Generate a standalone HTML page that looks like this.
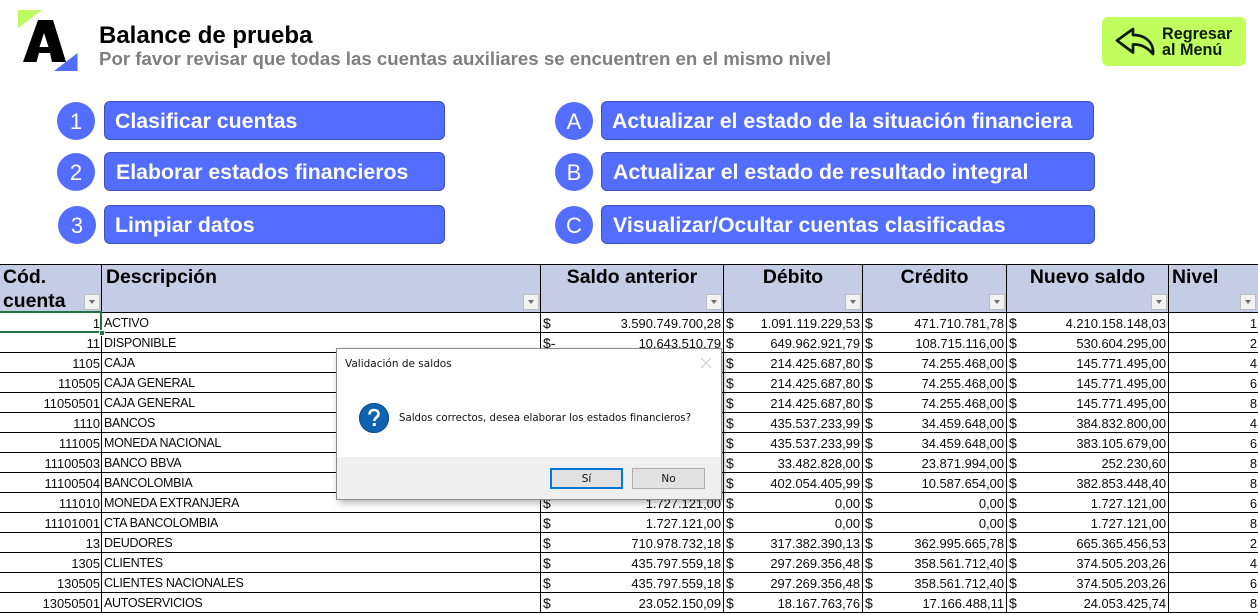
<!DOCTYPE html>
<html lang="es"><head><meta charset="utf-8"><title>Balance de prueba</title>
<style>
html,body{margin:0;padding:0;background:#fff}
#p{position:relative;width:1258px;height:614px;overflow:hidden;background:#fff;font-family:"Liberation Sans",sans-serif}
.a{position:absolute}
.t1{left:99px;top:22px;font-size:24px;font-weight:bold;color:#000;line-height:28px;white-space:nowrap}
.t2{left:99px;top:48px;font-size:18.66px;font-weight:bold;color:#7f7f7f;line-height:22px;white-space:nowrap}
.c{position:absolute;width:38px;height:38px;border-radius:50%;background:#536dfe;color:#fff;text-align:center;line-height:39px;font-size:22px}
.b{position:absolute;height:37px;box-sizing:content-box;border:1px solid #3f51b5;border-radius:6px;background:#536dfe;color:#fff;font-weight:bold;font-size:21.3px;line-height:39px;white-space:nowrap}
.b span{position:absolute;top:0}
.r{left:1102px;top:17px;width:144px;height:49px;background:#c0ff5e;border-radius:6px}
.r div{position:absolute;left:60px;font-weight:bold;font-size:16.2px;line-height:16px;color:#0c1a0c;white-space:nowrap}
table{position:absolute;left:-1px;top:264px;width:1259px;table-layout:fixed;border-collapse:collapse;font-size:12.9px;color:#0a0a0a}
td{border:1px solid #000;padding:2px 2px 0 2px;height:20px;line-height:17px;overflow:hidden;white-space:nowrap;text-align:right;box-sizing:border-box}
tr{height:20px}
td.n{padding-right:1px}
td.l{text-align:left;font-size:12.5px;letter-spacing:-.3px;padding-left:2px}
td i{float:left;font-style:normal;font-size:14px}
tr.h{height:47px}
th{border:1px solid #000;box-sizing:border-box;background:#c5cce6;font-size:19.4px;line-height:24px;vertical-align:top;text-align:center;padding:0 2px;height:47px;color:#000;overflow:hidden}
th div{height:47px}
th.l{text-align:left}
.f{position:absolute;width:16px;height:16px;background:#f2f2f2;border:1px solid #bdbdbd;box-sizing:border-box;top:294px}
.f:after{content:"";position:absolute;left:3.5px;top:5px;border-left:3.5px solid transparent;border-right:3.5px solid transparent;border-top:4px solid #6e6e6e}
.sel{left:-2px;top:311px;width:100px;height:18px;border:2px solid #217346}
.hd{left:99px;top:330px;width:6px;height:6px;background:#217346;border:1px solid #fff;box-sizing:border-box}
.dl{left:337px;top:349px;width:384px;height:150px;background:#fff;box-shadow:0 0 0 1px #8c8c8c,2px 3px 8px rgba(0,0,0,.35);font-family:"DejaVu Sans",sans-serif;font-size:10.5px;color:#111}
.ft{left:0;top:108px;width:384px;height:42px;background:#efefef}
.bt{position:absolute;top:119px;width:73px;height:21px;box-sizing:border-box;background:#e1e1e1;border:1px solid #adadad;text-align:center;line-height:21px;font-size:10.5px}
</style></head><body><div id="p">
<svg class="a" style="left:0;top:0" width="90" height="80" viewBox="0 0 90 80">
<polygon points="18,10 42,10 18,28" fill="#bdfb5e"/>
<path fill="#000" fill-rule="evenodd" d="M38,20H53L66,62H52L50,53H39L36.500,62H23ZM44,33L39.500,47H48.500Z"/>
<polygon points="77.500,53 77.500,71 54,71" fill="#536dfe"/>
</svg>
<div class="a t1">Balance de prueba</div>
<div class="a t2">Por favor revisar que todas las cuentas auxiliares se encuentren en el mismo nivel</div>
<div class="a r">
<svg class="a" style="left:0;top:0" width="60" height="49" viewBox="1102 17 60 49"><path d="M1117,40.500L1133,29V35C1147,35 1154,44 1153,54C1148,48 1142,44 1133,44.500V52.500Z" fill="none" stroke="#0c1a0c" stroke-width="2.700" stroke-linejoin="round"/></svg>
<div style="top:9px">Regresar</div><div style="top:25px">al Menú</div>
</div>
<div class="c" style="left:57px;top:102px">1</div>
<div class="c" style="left:57px;top:153px">2</div>
<div class="c" style="left:58px;top:206px">3</div>
<div class="c" style="left:555px;top:102px">A</div>
<div class="c" style="left:555px;top:153px">B</div>
<div class="c" style="left:555px;top:206px">C</div>
<div class="b" style="left:104px;top:101px;width:339px"><span style="left:10px">Clasificar cuentas</span></div>
<div class="b" style="left:104px;top:152px;width:339px"><span style="left:11px">Elaborar estados financieros</span></div>
<div class="b" style="left:104px;top:205px;width:339px"><span style="left:10px">Limpiar datos</span></div>
<div class="b" style="left:601px;top:101px;width:491px"><span style="left:10px">Actualizar el estado de la situación financiera</span></div>
<div class="b" style="left:601px;top:152px;width:492px"><span style="left:11px">Actualizar el estado de resultado integral</span></div>
<div class="b" style="left:601px;top:205px;width:492px"><span style="left:11px">Visualizar/Ocultar cuentas clasificadas</span></div>
<table>
<colgroup><col style="width:102px"><col style="width:439px"><col style="width:183px"><col style="width:139px"><col style="width:144px"><col style="width:162px"><col style="width:90px"></colgroup>
<tr class="h"><th class="l" style="padding-left:3px"><div>Cód. cuenta</div></th><th class="l" style="padding-left:4px"><div>Descripción</div></th><th><div>Saldo anterior</div></th><th><div>Débito</div></th><th><div>Crédito</div></th><th><div>Nuevo saldo</div></th><th class="l" style="padding-left:3px"><div>Nivel</div></th></tr>
<tr><td class="n">1</td><td class="l">ACTIVO</td><td><i>$</i>3.590.749.700,28</td><td><i>$</i>1.091.119.229,53</td><td><i>$</i>471.710.781,78</td><td><i>$</i>4.210.158.148,03</td><td class="n">1</td></tr>
<tr><td class="n">11</td><td class="l">DISPONIBLE</td><td><i>$-</i>10.643.510,79</td><td><i>$</i>649.962.921,79</td><td><i>$</i>108.715.116,00</td><td><i>$</i>530.604.295,00</td><td class="n">2</td></tr>
<tr><td class="n">1105</td><td class="l">CAJA</td><td><i>$</i>10.643.510,79</td><td><i>$</i>214.425.687,80</td><td><i>$</i>74.255.468,00</td><td><i>$</i>145.771.495,00</td><td class="n">4</td></tr>
<tr><td class="n">110505</td><td class="l">CAJA GENERAL</td><td><i>$</i>10.643.510,79</td><td><i>$</i>214.425.687,80</td><td><i>$</i>74.255.468,00</td><td><i>$</i>145.771.495,00</td><td class="n">6</td></tr>
<tr><td class="n">11050501</td><td class="l">CAJA GENERAL</td><td><i>$</i>10.643.510,79</td><td><i>$</i>214.425.687,80</td><td><i>$</i>74.255.468,00</td><td><i>$</i>145.771.495,00</td><td class="n">8</td></tr>
<tr><td class="n">1110</td><td class="l">BANCOS</td><td><i>$</i>10.643.510,79</td><td><i>$</i>435.537.233,99</td><td><i>$</i>34.459.648,00</td><td><i>$</i>384.832.800,00</td><td class="n">4</td></tr>
<tr><td class="n">111005</td><td class="l">MONEDA NACIONAL</td><td><i>$</i>10.643.510,79</td><td><i>$</i>435.537.233,99</td><td><i>$</i>34.459.648,00</td><td><i>$</i>383.105.679,00</td><td class="n">6</td></tr>
<tr><td class="n">11100503</td><td class="l">BANCO BBVA</td><td><i>$</i>10.643.510,79</td><td><i>$</i>33.482.828,00</td><td><i>$</i>23.871.994,00</td><td><i>$</i>252.230,60</td><td class="n">8</td></tr>
<tr><td class="n">11100504</td><td class="l">BANCOLOMBIA</td><td><i>$</i>10.643.510,79</td><td><i>$</i>402.054.405,99</td><td><i>$</i>10.587.654,00</td><td><i>$</i>382.853.448,40</td><td class="n">8</td></tr>
<tr><td class="n">111010</td><td class="l">MONEDA EXTRANJERA</td><td><i>$</i>1.727.121,00</td><td><i>$</i>0,00</td><td><i>$</i>0,00</td><td><i>$</i>1.727.121,00</td><td class="n">6</td></tr>
<tr><td class="n">11101001</td><td class="l">CTA BANCOLOMBIA</td><td><i>$</i>1.727.121,00</td><td><i>$</i>0,00</td><td><i>$</i>0,00</td><td><i>$</i>1.727.121,00</td><td class="n">8</td></tr>
<tr><td class="n">13</td><td class="l">DEUDORES</td><td><i>$</i>710.978.732,18</td><td><i>$</i>317.382.390,13</td><td><i>$</i>362.995.665,78</td><td><i>$</i>665.365.456,53</td><td class="n">2</td></tr>
<tr><td class="n">1305</td><td class="l">CLIENTES</td><td><i>$</i>435.797.559,18</td><td><i>$</i>297.269.356,48</td><td><i>$</i>358.561.712,40</td><td><i>$</i>374.505.203,26</td><td class="n">4</td></tr>
<tr><td class="n">130505</td><td class="l">CLIENTES NACIONALES</td><td><i>$</i>435.797.559,18</td><td><i>$</i>297.269.356,48</td><td><i>$</i>358.561.712,40</td><td><i>$</i>374.505.203,26</td><td class="n">6</td></tr>
<tr><td class="n">13050501</td><td class="l">AUTOSERVICIOS</td><td><i>$</i>23.052.150,09</td><td><i>$</i>18.167.763,76</td><td><i>$</i>17.166.488,11</td><td><i>$</i>24.053.425,74</td><td class="n">8</td></tr>
</table>
<div class="f" style="left:84px"></div><div class="f" style="left:523px"></div><div class="f" style="left:706px"></div><div class="f" style="left:845px"></div><div class="f" style="left:989px"></div><div class="f" style="left:1151px"></div><div class="f" style="left:1240px"></div>
<div class="a sel"></div><div class="a hd"></div>
<div class="a dl">
<div class="a" style="left:8px;top:9px;white-space:nowrap">Validación de saldos</div>
<svg class="a" style="left:363px;top:8px" width="12" height="12" viewBox="0 0 12 12"><path d="M1,1L11,11M11,1L1,11" stroke="#c8c8c8" stroke-width="1"/></svg>
<svg class="a" style="left:22px;top:54px" width="30" height="30" viewBox="0 0 30 30"><circle cx="15" cy="15" r="15" fill="#0f62b0"/><circle cx="15" cy="15" r="14.500" fill="none" stroke="#0a4f92"/><path d="M10.500,11.500C10.500,8.500 12.500,7 15,7C17.800,7 19.500,8.700 19.500,11C19.500,14.500 15.300,14.500 15.300,18" fill="none" stroke="#fff" stroke-width="2.600"/><rect x="13.800" y="20" width="3" height="3" fill="#fff"/></svg>
<div class="a" style="left:62px;top:64px;font-size:10.2px;white-space:nowrap">Saldos correctos, desea elaborar los estados financieros?</div>
<div class="a ft"></div>
<div class="bt" style="left:213px;border:2px solid #0078d7;line-height:19px">Sí</div>
<div class="bt" style="left:295px">No</div>
</div>
</div></body></html>
